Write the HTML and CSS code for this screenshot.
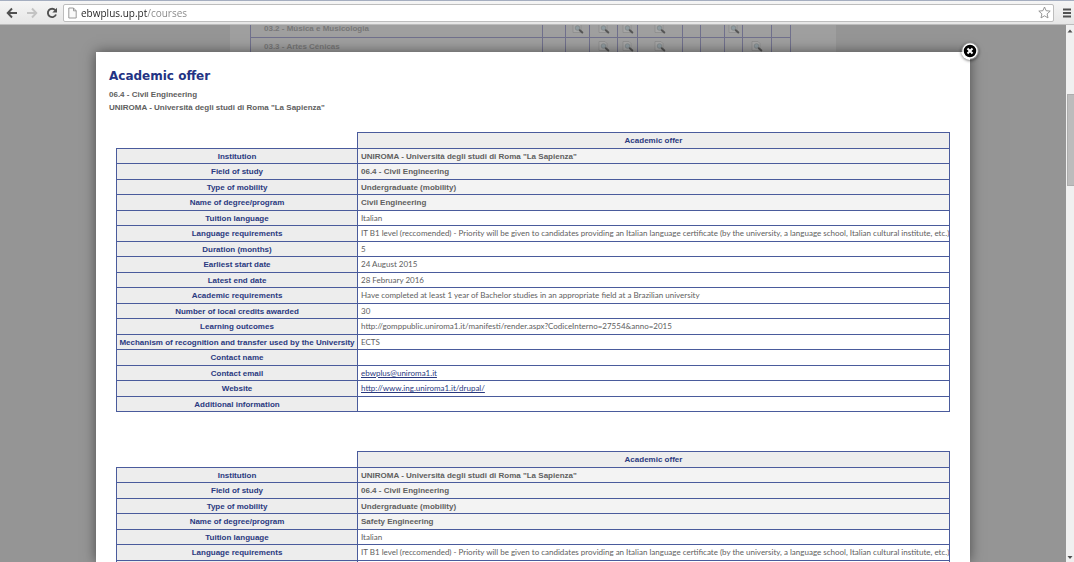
FILE: index.html
```html
<!DOCTYPE html>
<html lang="en">
<head>
<meta charset="utf-8">
<title>Academic offer</title>
<link rel="stylesheet" href="styles.css">
</head>
<body>
<svg class="defs" aria-hidden="true">
  <symbol id="lens" viewBox="0 0 12 11">
    <path d="M1 .5h6l2 2v7H1z" fill="#a6a6a6" stroke="#8a8a8a" stroke-width=".7"/>
    <circle cx="5.500" cy="5" r="2.300" fill="#8f9ba0" stroke="#808688" stroke-width=".8"/>
    <path d="M7.800 7.200l2.500 2.300" stroke="#555" stroke-width="2" stroke-linecap="round"/>
  </symbol>
</svg>
<header class="toolbar">
  <button class="tool" aria-label="Back"><svg width="12" height="12" viewBox="0 0 12 12"><path d="M6 1.5L1.7 6 6 10.500M2 6h9" fill="none" stroke="#505050" stroke-width="1.900"/></svg></button>
  <button class="tool" aria-label="Forward"><svg width="12" height="12" viewBox="0 0 12 12"><path d="M6 1.500L10.300 6 6 10.500M10 6H1" fill="none" stroke="#c3c3c3" stroke-width="1.900"/></svg></button>
  <button class="tool" aria-label="Reload"><svg width="12" height="12" viewBox="0 0 12 12"><path d="M9.300 3.200A4.200 4.200 0 1 0 10 7.500" fill="none" stroke="#505050" stroke-width="1.900"/><path d="M11 .8v4.700H6.300z" fill="#505050"/></svg></button>
  <div class="address">
    <svg width="9" height="12" viewBox="0 0 9 12"><path d="M.8 1h4.700l2.700 2.800V11H.8zM5.500 1v2.800h2.700" fill="#fafafa" stroke="#909090" stroke-width=".9"/></svg>
    <input class="url" type="text" aria-label="Address" value="ebwplus.up.pt/courses">
    <button class="star" aria-label="Bookmark"><svg width="13" height="13" viewBox="0 0 13 13"><path d="M6.500 1l1.600 3.700 4.100.4L9.100 7.900l.9 4-3.500-2.100L3 11.900l.9-4L.8 5.100l4.100-.4z" fill="#fff" stroke="#8c8c8c" stroke-width=".9"/></svg></button>
  </div>
  <button class="menu" aria-label="Menu"><svg width="10" height="10" viewBox="0 0 10 10"><path d="M1 1.500h8M1 5h8M1 8.500h8" stroke="#505050" stroke-width="2"/></svg></button>
</header>
<div class="window">
  <main class="page">
    <div class="sheet">
      <table class="courses">
        <colgroup><col class="c-name"><col class="c23"><col class="c24"><col class="c28"><col class="c20"><col class="c45"><col class="c18"><col class="c24"><col class="c18"><col class="c29"><col class="c19"></colgroup>
        <tr><th>03.2 - Música e Musicologia</th><td></td><td><svg><use href="#lens"/></svg></td><td><svg><use href="#lens"/></svg></td><td><svg><use href="#lens"/></svg></td><td><svg><use href="#lens"/></svg></td><td></td><td></td><td><svg><use href="#lens"/></svg></td><td></td><td></td></tr>
        <tr><th>03.3 - Artes Cénicas</th><td></td><td></td><td><svg><use href="#lens"/></svg></td><td><svg><use href="#lens"/></svg></td><td><svg><use href="#lens"/></svg></td><td></td><td></td><td></td><td><svg><use href="#lens"/></svg></td><td></td></tr>
      </table>
    </div>
    <section class="dialog" role="dialog" aria-labelledby="title">
      <button class="close" aria-label="Close"><svg width="18" height="18" viewBox="0 0 18 18"><circle cx="9" cy="9" r="7" fill="#000" stroke="#fff" stroke-width="1.500"/><path d="M6.500 6.500l5 5m0-5l-5 5" stroke="#fff" stroke-width="2"/></svg></button>
      <div class="content">
        <h1 id="title">Academic offer</h1>
        <p>06.4 - Civil Engineering</p>
        <p>UNIROMA - Università degli studi di Roma "La Sapienza"</p>
        <table class="offer">
          <tr><td class="blank"></td><th>Academic offer</th></tr>
          <tr class="key"><th>Institution</th><td>UNIROMA - Università degli studi di Roma "La Sapienza"</td></tr>
          <tr class="key"><th>Field of study</th><td>06.4 - Civil Engineering</td></tr>
          <tr class="key"><th>Type of mobility</th><td>Undergraduate (mobility)</td></tr>
          <tr class="key"><th>Name of degree/program</th><td>Civil Engineering</td></tr>
          <tr><th>Tuition language</th><td>Italian</td></tr>
          <tr><th>Language requirements</th><td>IT B1 level (reccomended) - Priority will be given to candidates providing an Italian language certificate (by the university, a language school, Italian cultural institute, etc.)</td></tr>
          <tr><th>Duration (months)</th><td>5</td></tr>
          <tr><th>Earliest start date</th><td>24 August 2015</td></tr>
          <tr><th>Latest end date</th><td>28 February 2016</td></tr>
          <tr><th>Academic requirements</th><td>Have completed at least 1 year of Bachelor studies in an appropriate field at a Brazilian university</td></tr>
          <tr><th>Number of local credits awarded</th><td>30</td></tr>
          <tr><th>Learning outcomes</th><td>http://gomppublic.uniroma1.it/manifesti/render.aspx?CodiceInterno=27554&amp;anno=2015</td></tr>
          <tr><th>Mechanism of recognition and transfer used by the University</th><td>ECTS</td></tr>
          <tr><th>Contact name</th><td></td></tr>
          <tr><th>Contact email</th><td><a href="#">ebwplus@uniroma1.it</a></td></tr>
          <tr><th>Website</th><td><a href="#">http://www.ing.uniroma1.it/drupal/</a></td></tr>
          <tr><th>Additional information</th><td></td></tr>
        </table>
        <table class="offer">
          <tr><td class="blank"></td><th>Academic offer</th></tr>
          <tr class="key"><th>Institution</th><td>UNIROMA - Università degli studi di Roma "La Sapienza"</td></tr>
          <tr class="key"><th>Field of study</th><td>06.4 - Civil Engineering</td></tr>
          <tr class="key"><th>Type of mobility</th><td>Undergraduate (mobility)</td></tr>
          <tr class="key"><th>Name of degree/program</th><td>Safety Engineering</td></tr>
          <tr><th>Tuition language</th><td>Italian</td></tr>
          <tr><th>Language requirements</th><td>IT B1 level (reccomended) - Priority will be given to candidates providing an Italian language certificate (by the university, a language school, Italian cultural institute, etc.)</td></tr>
          <tr><th></th><td></td></tr>
        </table>
      </div>
    </section>
  </main>
  <div class="scrollbar" aria-hidden="true">
    <svg width="8" height="9" viewBox="0 0 8 9"><path d="M1.500 7.500h5L4 4.500z" fill="#505050"/></svg>
    <div class="track"><div class="thumb"></div></div>
    <svg width="8" height="9" viewBox="0 0 8 9"><path d="M1.500 3h5L4 6z" fill="#505050"/></svg>
  </div>
</div>
</body>
</html>
```
FILE: styles.css
```css
* { box-sizing: border-box; }
body {
  margin: 0;
  height: 100vh;
  display: flex;
  flex-direction: column;
  overflow: hidden;
  font-family: Lato, sans-serif;
  font-size: 8px;
  color: #606060;
}
button { padding: 0; border: 0; background: none; display: flex; }
.defs { display: none; }

.toolbar {
  height: 25px;
  flex: none;
  display: flex;
  align-items: center;
  padding: 0 2px 0 6px;
  gap: 8px;
  background: linear-gradient(#f5f5f5, #e6e6e6);
  border-top: 1px solid #a5aec0;
  border-bottom: 1px solid #bcbcbc;
}
.tool { width: 12px; }
.address {
  flex: 1;
  height: 18px;
  display: flex;
  align-items: center;
  gap: 4px;
  margin-left: -3px;
  padding: 0 2px 0 4px;
  background: #fff;
  border: 1px solid #bdbdbd;
  border-radius: 2px;
}
.url {
  flex: 1;
  min-width: 0;
  height: 16px;
  padding: 0;
  border: 0;
  outline: 0;
  font: 10px "Open Sans", sans-serif;
  color: transparent;
  background: linear-gradient(90deg, #222 66px, #858585 66px);
  background-clip: text;
  -webkit-background-clip: text;
}

.window { flex: 1; min-height: 0; display: flex; }
.page {
  flex: 1;
  position: relative;
  overflow: hidden;
  background: #959595;
}
.sheet {
  width: 606px;
  height: 100%;
  margin: 0 auto;
  padding: 0 20px;
  background: #9f9f9f;
}
.courses {
  margin-top: -6px;
  table-layout: fixed;
  width: 541px;
  border-collapse: collapse;
  color: #777;
}
.courses tr { height: 18px; }
.courses th, .courses td { border: 1px solid #70708c; padding: 0; text-align: center; }
.courses th { padding-left: 13px; text-align: left; }
.courses svg { width: 12px; height: 11px; display: block; margin: 0 auto; }
.c-name { width: 292px; }
.c18 { width: 18px; }
.c19 { width: 19px; }
.c20 { width: 20px; }
.c23 { width: 23px; }
.c24 { width: 24px; }
.c28 { width: 28px; }
.c29 { width: 29px; }
.c45 { width: 45px; }

.dialog {
  position: absolute;
  inset: 27px 96px 0 96px;
  background: #fff;
  box-shadow: 0 0 12px rgba(0, 0, 0, .5);
}
.close {
  position: absolute;
  top: -10px;
  right: -9px;
  border-radius: 50%;
  box-shadow: 0 1px 3px rgba(0, 0, 0, .5);
}
.content { height: 100%; overflow: hidden; padding: 17px 14px 0 13px; }
h1 {
  margin: 0 0 4px;
  font: bold 12px/15px "DejaVu Sans", sans-serif;
  color: #233384;
}
p { margin: 0; line-height: 13px; }
p, th, .key td { font-family: "Liberation Sans", sans-serif; font-weight: bold; }

.offer {
  width: calc(100% - 13px);
  margin: 18px 6px 39px 7px;
  table-layout: fixed;
  border-collapse: collapse;
  line-height: 9px;
}
.offer + .offer { margin-top: 0; }
.offer tr { height: 15px; }
.offer tr:nth-child(odd) { height: 16px; }
.offer th, .offer td { border: 1px solid #4a5b9c; padding: 1px 0 1px 3px; white-space: nowrap; }
.offer th { padding: 1px 2px; background: #ededed; color: #2a3980; text-align: center; }
.offer tr > :first-child { width: 241px; }
.offer .blank { border-top: 0; border-left: 0; }
.offer .key td { background: #f3f3f3; }
.offer a { color: #2a3980; text-decoration: underline; }

.scrollbar {
  width: 8px;
  display: flex;
  flex-direction: column;
  background: #f0f0f0;
}
.track { flex: 1; padding: 60px 0 0 1px; }
.thumb { height: 92px; background: #bcbcbc; border: 1px solid #adadad; border-right: 0; }
```
